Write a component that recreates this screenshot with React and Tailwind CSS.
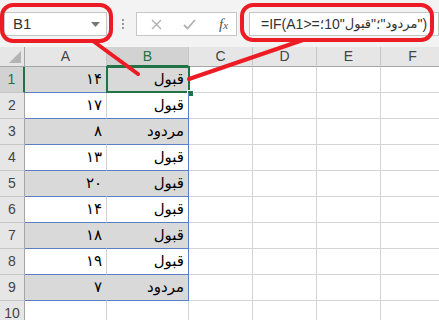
import React from 'react';

const data = [
  ['۱۴', 'قبول'],
  ['۱۷', 'قبول'],
  ['۸', 'مردود'],
  ['۱۳', 'قبول'],
  ['۲۰', 'قبول'],
  ['۱۴', 'قبول'],
  ['۱۸', 'قبول'],
  ['۱۹', 'قبول'],
  ['۷', 'مردود'],
];

function EmptyCells() {
  return (
    <>
      <div className="w-[64px] shrink-0 border-r border-b border-[#d4d4d4]" />
      <div className="w-[64px] shrink-0 border-r border-b border-[#d4d4d4]" />
      <div className="w-[64px] shrink-0 border-r border-b border-[#d4d4d4]" />
      <div className="w-[64px] shrink-0 border-r border-b border-[#d4d4d4]" />
    </>
  );
}

function DataRow({ n, a, b }) {
  const gray = n % 2 === 1;
  const selected = n === 1;
  return (
    <div className="flex h-[26px]">
      <div
        className={
          selected
            ? 'w-[25px] shrink-0 border-b border-[#c6c6c6] bg-[#d2d2d2] flex items-center justify-center text-[14px] text-[#217346] border-r-2 border-r-[#217346]'
            : 'w-[25px] shrink-0 border-b border-r border-[#c6c6c6] border-r-[#a6a6a6] bg-[#e6e6e6] flex items-center justify-center text-[14px] text-[#444]'
        }
      >
        {n}
      </div>
      <div
        className={
          gray
            ? 'w-[82px] shrink-0 bg-[#d9d9d9] border-r border-r-[#d9d9d9] border-b border-b-[#5b7fc7] flex items-center justify-end pr-[4px] text-[15px] text-black'
            : 'w-[82px] shrink-0 bg-white border-r border-r-[#d4d4d4] border-b border-b-[#5b7fc7] flex items-center justify-end pr-[4px] text-[15px] text-black'
        }
      >
        {a}
      </div>
      <div
        className={
          gray
            ? 'relative w-[82px] shrink-0 bg-[#d9d9d9] border-r border-r-[#5b7fc7] border-b border-b-[#5b7fc7] flex items-center justify-end pr-[4px] text-[15px] text-black'
            : 'relative w-[82px] shrink-0 bg-white border-r border-r-[#5b7fc7] border-b border-b-[#5b7fc7] flex items-center justify-end pr-[4px] text-[15px] text-black'
        }
      >
        <span dir="rtl">{b}</span>
        {selected && (
          <>
            <div className="absolute left-[-1px] top-[-1px] w-[84px] h-[27px] border-2 border-[#217346]" />
            <div className="absolute left-[80px] top-[23px] w-[7px] h-[7px] bg-[#217346] border border-white" />
          </>
        )}
      </div>
      <EmptyCells />
    </div>
  );
}

export default function App() {
  return (
    <div
      className="relative w-[439px] h-[320px] overflow-hidden bg-white"
      style={{ fontFamily: '"Liberation Sans", "DejaVu Sans", sans-serif' }}
    >
      {/* toolbar */}
      <div className="h-[47px] bg-[#f3f3f3] flex items-start pt-[12px]">
        <div className="ml-[4px] w-[103px] h-[24px] bg-white border border-[#c6c6c6] flex items-center justify-between pl-[8px] pr-[6px]">
          <span className="text-[15px] text-[#333]">B1</span>
          <svg width="9" height="5" viewBox="0 0 9 5">
            <path d="M0 0 L9 0 L4.5 5 Z" fill="#777" />
          </svg>
        </div>
        <div className="ml-[14px] w-[3px] h-[24px] flex flex-col items-center justify-center gap-[2px]">
          <div className="w-[2px] h-[2px] bg-[#9a9a9a]" />
          <div className="w-[2px] h-[2px] bg-[#9a9a9a]" />
          <div className="w-[2px] h-[2px] bg-[#9a9a9a]" />
        </div>
        <div className="ml-[12px] w-[101px] h-[24px] bg-white border border-[#c6c6c6] flex items-center">
          <svg className="ml-[14px]" width="11" height="11" viewBox="0 0 11 11">
            <path d="M1 1 L10 10 M10 1 L1 10" stroke="#b0b0b0" strokeWidth="1.4" />
          </svg>
          <svg className="ml-[21px]" width="13" height="11" viewBox="0 0 13 11">
            <path d="M1 6 L4.5 9.5 L12 1" stroke="#b0b0b0" strokeWidth="1.8" fill="none" />
          </svg>
          <span
            className="ml-[23px] text-[15px] italic text-[#555]"
            style={{ fontFamily: '"Liberation Serif", serif' }}
          >
            f<span className="text-[11px]">x</span>
          </span>
        </div>
        <div className="ml-[12px] flex-1 h-[24px] bg-white border border-[#c6c6c6] flex items-center pl-[11px] text-[14px] text-[#333] whitespace-nowrap overflow-hidden">
          <span>=IF(A1&gt;=</span>
          <span>؛</span>
          <span>10"</span>
          <span dir="rtl" className="text-[13px]">قبول</span>
          <span>"</span>
          <span>؛</span>
          <span>"</span>
          <span dir="rtl" className="text-[13px]">مردود</span>
          <span>")</span>
        </div>
      </div>

      {/* column headers */}
      <div className="flex h-[20px] bg-[#e6e6e6] text-[14px] text-[#444]">
        <div className="relative w-[25px] shrink-0 border-r border-b border-[#a6a6a6]">
          <svg className="absolute right-[3px] bottom-[3px]" width="12" height="12" viewBox="0 0 12 12">
            <path d="M12 0 L12 12 L0 12 Z" fill="#b4b4b4" />
          </svg>
        </div>
        <div className="w-[82px] shrink-0 border-r border-b border-[#c6c6c6] border-b-[#a6a6a6] flex items-center justify-center">A</div>
        <div className="w-[82px] shrink-0 border-r border-[#c6c6c6] bg-[#d2d2d2] border-b-2 border-b-[#217346] flex items-center justify-center text-[#217346]">B</div>
        <div className="w-[64px] shrink-0 border-r border-b border-[#c6c6c6] border-b-[#a6a6a6] flex items-center justify-center">C</div>
        <div className="w-[64px] shrink-0 border-r border-b border-[#c6c6c6] border-b-[#a6a6a6] flex items-center justify-center">D</div>
        <div className="w-[64px] shrink-0 border-r border-b border-[#c6c6c6] border-b-[#a6a6a6] flex items-center justify-center">E</div>
        <div className="w-[64px] shrink-0 border-r border-b border-[#c6c6c6] border-b-[#a6a6a6] flex items-center justify-center">F</div>
      </div>

      {/* rows */}
      {data.map(([a, b], i) => (
        <DataRow key={i} n={i + 1} a={a} b={b} />
      ))}
      <div className="flex h-[26px]">
        <div className="w-[25px] shrink-0 border-b border-r border-[#c6c6c6] border-r-[#a6a6a6] bg-[#e6e6e6] flex items-center justify-center text-[14px] text-[#444]">
          10
        </div>
        <div className="w-[82px] shrink-0 border-r border-b border-[#d4d4d4]" />
        <div className="w-[82px] shrink-0 border-r border-b border-[#d4d4d4]" />
        <EmptyCells />
      </div>

      {/* red annotations */}
      <svg className="absolute inset-0 pointer-events-none" width="439" height="320" viewBox="0 0 439 320">
        <g stroke="#ed1c24" strokeWidth="4" fill="none" strokeLinecap="round">
          <rect x="2" y="5" width="109" height="36" rx="11" />
          <rect x="242" y="5" width="190" height="35" rx="11" />
          <path d="M93 41 L138 74" />
          <path d="M189 79 L303 40" />
        </g>
      </svg>
    </div>
  );
}
